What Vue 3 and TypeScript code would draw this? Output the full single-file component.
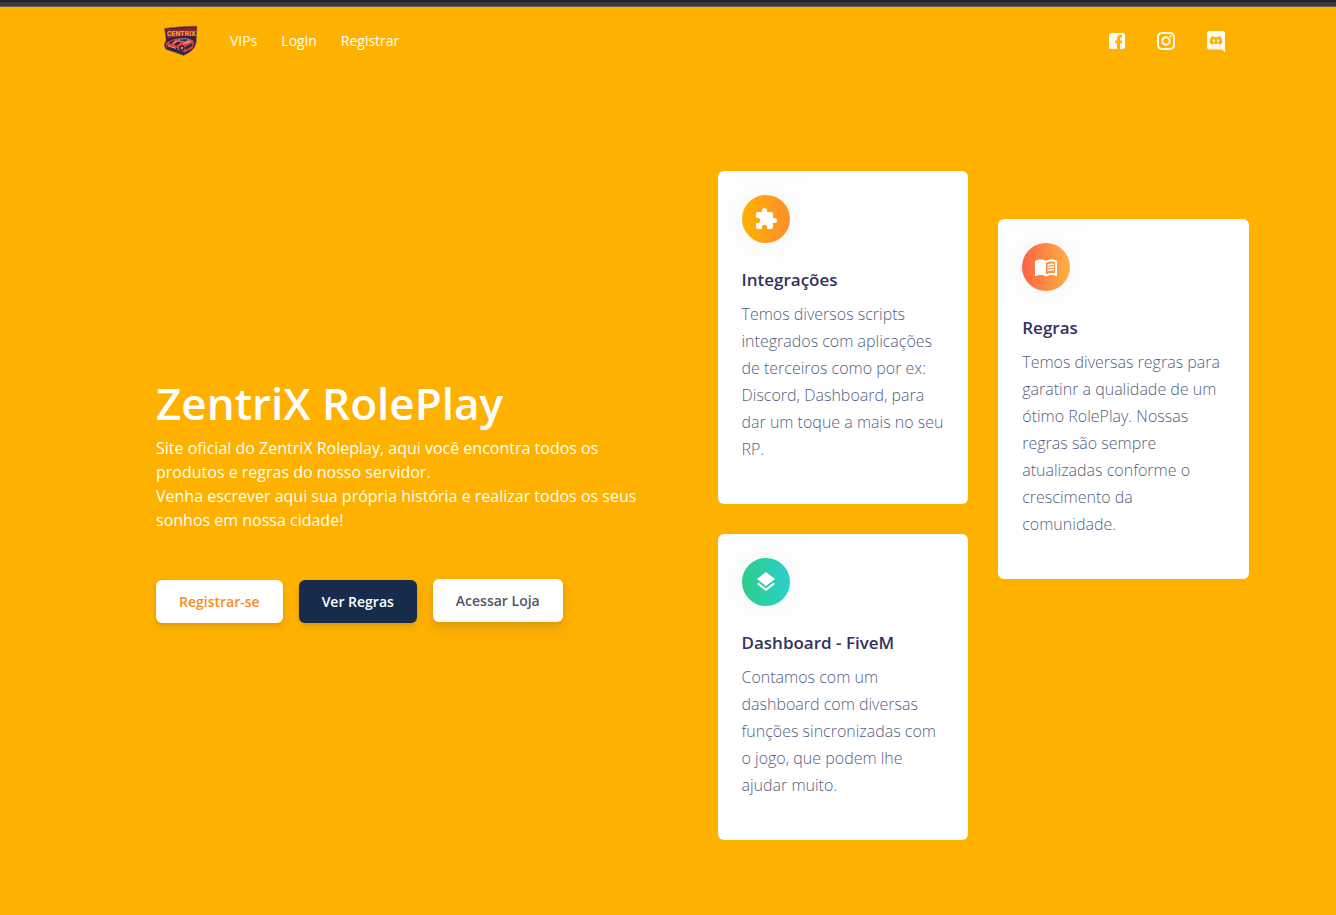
<script setup lang="ts">
interface Feature {
  title: string
  text: string
  icon: 'puzzle' | 'book' | 'layers'
}

const navLinks: string[] = ['VIPs', 'Login', 'Registrar']

const columns: Feature[][] = [
  [
    {
      title: 'Integrações',
      text: 'Temos diversos scripts integrados com aplicações de terceiros como por ex: Discord, Dashboard, para dar um toque a mais no seu RP.',
      icon: 'puzzle',
    },
    {
      title: 'Dashboard - FiveM',
      text: 'Contamos com um dashboard com diversas funções sincronizadas com o jogo, que podem lhe ajudar muito.',
      icon: 'layers',
    },
  ],
  [
    {
      title: 'Regras',
      text: 'Temos diversas regras para garatinr a qualidade de um ótimo RolePlay. Nossas regras são sempre atualizadas conforme o crescimento da comunidade.',
      icon: 'book',
    },
  ],
]
</script>

<template>
  <div class="page">
    <div class="strip"></div>
    <header class="header">
      <a class="brand" href="#" aria-label="CENTRIX">
        <svg width="34" height="32" viewBox="0 0 34 32" aria-hidden="true">
          <path d="M.5 3.500 8 2.500 20 1.500l13-.5-.4 10c0 6-.6 9-2.600 12-2 3-5 5-10.500 7.500L14 28.500 2 24.500 0 20l2-5z" fill="#2b2740" stroke="#a0743c" stroke-width=".7" />
          <path d="M2 4.500l29.500-2.300-.4 9L17 11 3.500 13.500z" fill="#8b2431" />
          <text x="3" y="11" class="brand-name">CENTRIX</text>
          <path d="M2 18c3-2 7-4 11-4.500l9-.3 7 2 1 3-1.500 5-7.500 4-6-2L2 22z" fill="#e33f48" />
          <path d="M14 14l7-1 6 1.500-3 2.500-10-.5z" fill="#8e8193" />
          <path d="M15 15l6-1 3 .8-3 1.600z" fill="#33304a" />
          <path d="M5 17.500l4-2 3 .6-5 2.900zM10 18.500l4-1.800 3 .6-5 3.700z" fill="#25223a" />
          <path d="M8 18l4-2.300 2 .5-4 2.600z" fill="#ff9d37" />
          <path d="M2.500 20l11 3v2.500L3.500 22.500zM21 22l7.500-4-.5 3-6 4z" fill="#30263e" />
          <path d="M4 20.800l8 2.500M19 18.500l8-2" stroke="#ffb3a2" stroke-width=".9" />
          <circle cx="18" cy="23" r="2.700" fill="#262238" />
          <circle cx="18" cy="23" r="1.200" fill="#b5a5a7" />
        </svg>
      </a>
      <nav class="nav">
        <a v-for="link in navLinks" :key="link" href="#">{{ link }}</a>
      </nav>
      <div class="social">
        <a href="#" aria-label="Facebook">
          <svg width="16" height="16" viewBox="0 0 16 16">
            <path d="M2 0h12a2 2 0 0 1 2 2v12a2 2 0 0 1-2 2h-3v-5.800h2.200V7.500H11V5.800c0-.8.400-1.200 1.200-1.200H13V2.100h-1.800C9 2.100 8 3.500 8 5.400v2.100H6.300v2.700H8V16H2a2 2 0 0 1-2-2V2a2 2 0 0 1 2-2z" fill="currentColor" />
          </svg>
        </a>
        <a href="#" aria-label="Instagram">
          <svg width="18" height="18" viewBox="0 0 18 18" fill="none" stroke="currentColor">
            <rect x="1" y="1" width="16" height="16" rx="4" stroke-width="2" />
            <circle cx="9" cy="9" r="3.700" stroke-width="2" />
            <circle cx="13.700" cy="4.300" r="1.100" fill="currentColor" stroke="none" />
          </svg>
        </a>
        <a href="#" aria-label="Discord">
          <svg width="18" height="21" viewBox="0 0 18 21">
            <path d="M2.200 0h13.600A2.200 2.200 0 0 1 18 2.200V21l-3-2.500H2.200A2.200 2.200 0 0 1 0 16.300V2.200A2.200 2.200 0 0 1 2.200 0z" fill="currentColor" />
            <path d="M6.400 5.300l.4.600h4.400l.4-.6c1 .1 1.900.5 2.500 1 .8 1.600 1.200 3.500 1.100 5.800-.8.900-1.800 1.300-3 1.400l-.7-1c-1.500.5-3.500.5-5 0l-.7 1c-1.200-.1-2.200-.5-3-1.400-.1-2.300.3-4.200 1.100-5.800.6-.5 1.500-.9 2.500-1z" fill="#ffb100" />
            <ellipse cx="6.900" cy="9.800" rx="1.200" ry="1.300" fill="currentColor" />
            <ellipse cx="11.100" cy="9.800" rx="1.200" ry="1.300" fill="currentColor" />
          </svg>
        </a>
      </div>
    </header>

    <main class="hero">
      <section class="intro">
        <h1>ZentriX RolePlay</h1>
        <p>
          Site oficial do ZentriX Roleplay, aqui você encontra todos os produtos e regras do nosso servidor.<br />
          Venha escrever aqui sua própria história e realizar todos os seus sonhos em nossa cidade!
        </p>
        <div class="actions">
          <button type="button" class="btn btn-primary">Registrar-se</button>
          <button type="button" class="btn btn-dark">Ver Regras</button>
          <button type="button" class="btn btn-raised">Acessar Loja</button>
        </div>
      </section>

      <section class="features">
        <div v-for="(column, index) in columns" :key="index" class="column">
          <article v-for="feature in column" :key="feature.title" class="card">
            <div class="badge" :class="feature.icon">
              <svg width="24" height="24" viewBox="0 0 24 24" fill="currentColor" aria-hidden="true">
                <path v-if="feature.icon === 'puzzle'" d="M20.500 11H19V7c0-1.100-.9-2-2-2h-4V3.500a2.500 2.500 0 0 0-5 0V5H4c-1.100 0-1.990.9-1.990 2v3.800H3.500c1.490 0 2.700 1.210 2.700 2.700s-1.210 2.700-2.700 2.700H2V20c0 1.100.9 2 2 2h3.800v-1.500c0-1.490 1.210-2.700 2.700-2.700s2.700 1.210 2.700 2.700V22H17c1.100 0 2-.9 2-2v-4h1.500a2.500 2.500 0 0 0 0-5z" />
                <path v-else-if="feature.icon === 'layers'" d="M11.990 18.540l-7.370-5.730L3 14.070l9 7 9-7-1.630-1.270zM12 16l7.360-5.730L21 9l-9-7-9 7 1.630 1.270z" />
                <g v-else>
                  <path d="M21 5c-1.110-.35-2.330-.5-3.500-.5-1.950 0-4.050.4-5.500 1.500-1.450-1.100-3.550-1.500-5.500-1.500S2.450 4.900 1 6v14.650c0 .25.250.5.500.5.100 0 .150-.05.250-.05C3.100 20.450 5.050 20 6.500 20c1.950 0 4.050.4 5.500 1.500 1.350-.85 3.800-1.500 5.500-1.500 1.650 0 3.350.3 4.750 1.050.1.050.150.050.250.050.250 0 .5-.25.5-.5V6c-.6-.45-1.250-.75-2-1zm0 13.500c-1.100-.35-2.300-.5-3.500-.5-1.700 0-4.150.650-5.500 1.500V8c1.350-.85 3.800-1.500 5.500-1.500 1.200 0 2.400.150 3.500.5z" />
                  <path d="M13.500 10.200c1.800-.8 4-1.100 6.500-.8M13.500 12.900c1.800-.8 4-1.100 6.500-.8M13.500 15.600c1.800-.8 4-1.100 6.500-.8" fill="none" stroke="currentColor" stroke-width="1.500" />
                </g>
              </svg>
            </div>
            <h2>{{ feature.title }}</h2>
            <p>{{ feature.text }}</p>
          </article>
        </div>
      </section>
    </main>
  </div>
</template>

<style>
body {
  margin: 0;
  background: #ffb100;
}
</style>

<style scoped>
.page {
  min-height: 100vh;
  background: #ffb100;
  color: #fff;
  font-family: "Open Sans", "Noto Sans", sans-serif;
  box-sizing: border-box;
}

.strip {
  height: 4px;
  border-top: 2px solid #242228;
  border-bottom: 1px solid #666055;
  background: #38383a;
}

a {
  color: inherit;
  text-decoration: none;
}

.header {
  display: flex;
  align-items: center;
  height: 68px;
  padding: 0 111px 0 164px;
}

.brand {
  display: flex;
}

.brand-name {
  fill: #ffa62b;
  font: 700 7px "Roboto", sans-serif;
}

.nav {
  display: flex;
  gap: 24px;
  margin-left: 32px;
  font-size: 14px;
  line-height: 20px;
}

.social {
  display: flex;
  align-items: center;
  gap: 32px;
  margin-left: auto;
  color: #fffaf0;
}

.social a {
  display: flex;
}

.hero {
  display: grid;
  grid-template-columns: 1fr 1fr;
  gap: 30px;
  padding: 96px 87px 75px 156px;
}

.intro {
  align-self: center;
  padding-bottom: 12px;
}

h1 {
  margin: 0 0 6px;
  font-size: 44px;
  line-height: 54px;
  font-weight: 600;
}

.intro p {
  max-width: 500px;
  margin: 0 0 48px;
  font-size: 16px;
  line-height: 24px;
}

.actions {
  display: flex;
  gap: 16px;
}

.btn {
  height: 43px;
  padding: 0 23px;
  border: 0;
  border-radius: 6px;
  background: #fff;
  font: 600 14px/20px "Open Sans", "Noto Sans", sans-serif;
  box-shadow: 0 4px 6px rgba(50, 50, 93, 0.11), 0 1px 3px rgba(0, 0, 0, 0.08);
  cursor: pointer;
}

.btn-primary {
  color: #fb8c1c;
}

.btn-dark {
  background: #172b4d;
  color: #fff;
}

.btn-raised {
  color: #54546a;
  transform: translateY(-1px);
  box-shadow: 0 7px 14px rgba(50, 50, 93, 0.1), 0 3px 6px rgba(0, 0, 0, 0.08);
}

.features {
  display: grid;
  grid-template-columns: 1fr 1fr;
  gap: 30px;
  align-items: start;
}

.column {
  display: grid;
  gap: 30px;
}

.column + .column {
  padding-top: 48px;
}

.card {
  padding: 24px 24px 41px;
  border-radius: 6px;
  background: #fff;
}

.badge {
  display: flex;
  align-items: center;
  justify-content: center;
  width: 48px;
  height: 48px;
  border-radius: 50%;
  color: #fff;
  box-shadow: 0 0 32px rgba(136, 152, 170, 0.15);
}

.puzzle {
  background: linear-gradient(90deg, #ffb100, #ff8e2c);
}

.book {
  background: linear-gradient(90deg, #fc6244, #fcb244);
}

.layers {
  background: linear-gradient(90deg, #2dce89, #2dcecc);
}

.card h2 {
  margin: 24px 0 8px;
  color: #32325d;
  font-size: 17px;
  line-height: 26px;
  font-weight: 600;
}

.card p {
  margin: 0;
  color: #525f7f;
  font-size: 16px;
  line-height: 27px;
  font-weight: 300;
}
</style>
